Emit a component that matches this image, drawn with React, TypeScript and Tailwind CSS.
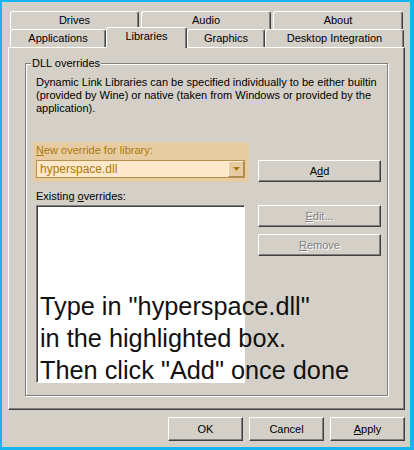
const ui = { fontFamily: '"Liberation Sans", Arial, sans-serif' };

const raised =
  "border border-t-white border-l-white border-r-[#404040] border-b-[#404040] shadow-[inset_-1px_-1px_0_#808080]";
const sunken =
  "border border-t-[#808080] border-l-[#808080] border-r-white border-b-white shadow-[inset_1px_1px_0_#404040]";

function Tab({ label, w, selected }: { label: string; w: string; selected?: boolean }) {
  return (
    <div
      className={`${w} flex items-center justify-center rounded-t-[3px] border-t border-l border-r border-t-white border-l-white border-r-[#404040] bg-[#d4d0c8] shadow-[inset_-1px_0_0_#808080] ${
        selected ? "relative z-10 -mb-[1px] h-[21px] pb-[3px]" : "h-[18px]"
      }`}
    >
      {label}
    </div>
  );
}

function Btn({
  children,
  w,
  h = "h-[22px]",
  disabled,
}: {
  children: React.ReactNode;
  w: string;
  h?: string;
  disabled?: boolean;
}) {
  return (
    <button
      type="button"
      className={`${raised} ${w} ${h} flex items-center justify-center bg-[#d4d0c8] ${
        disabled ? "text-[#808080] [text-shadow:1px_1px_0_#fff]" : "text-black"
      }`}
    >
      {children}
    </button>
  );
}

export default function App() {
  return (
    <div
      className="relative flex h-[450px] w-[414px] flex-col border-t-2 border-l-2 border-r-[4px] border-b-[3px] border-[#14b4f0] bg-[#d4d0c8] text-[11px] leading-[13px] text-black"
      style={ui}
    >
      {/* tabs */}
      <div className="ml-[8px] mt-[9px] flex gap-[2px]">
        <Tab label="Drives" w="w-[129px]" />
        <Tab label="Audio" w="w-[130px]" />
        <Tab label="About" w="w-[130px]" />
      </div>
      <div className="ml-[8px] flex h-[18px] items-end">
        <Tab label="Applications" w="w-[96px]" />
        <Tab label="Libraries" w="w-[81px]" selected />
        <Tab label="Graphics" w="w-[78px]" />
        <Tab label="Desktop Integration" w="w-[139px]" />
      </div>

      {/* panel */}
      <div className={`${raised} ml-[6px] mr-[5px] h-[363px] pt-[15px]`}>
        <div className="relative mx-[16px] h-[333px] border border-[#808080] shadow-[1px_1px_0_#fff,inset_1px_1px_0_#fff]">
          <span className="absolute -top-[7px] left-[5px] bg-[#d4d0c8] px-[1px]">DLL overrides</span>

          <p className="ml-[10px] mr-[10px] mt-[12px]">
            Dynamic Link Libraries can be specified individually to be either builtin (provided by Wine) or native
            (taken from Windows or provided by the application).
          </p>

          <div className="ml-[7px] mt-[27px] flex items-start">
            <div className="h-[40px] w-[216px] bg-[#e8cca1] pl-[3px] pt-[2px]">
              <div className="h-[16px] text-[#a8790c]">
                <u>N</u>ew override for library:
              </div>
              <div className="flex h-[18px] w-[209px] items-center border border-[#b3904e] bg-[#fee8c9] pl-[3px] text-[12px] text-[#a8790c]">
                <span className="flex-1">hyperspace.dll</span>
                <span className="flex h-[16px] w-[16px] items-center justify-center border border-t-[#fff2dc] border-l-[#fff2dc] border-r-[#a88a55] border-b-[#a88a55] bg-[#e8cca1]">
                  <svg width="7" height="4" viewBox="0 0 7 4">
                    <path d="M0 0h7L3.5 4z" fill="#a8790c" />
                  </svg>
                </span>
              </div>
            </div>
            <div className="ml-[9px] mt-[18px]">
              <Btn w="w-[123px]">
                A<u>d</u>d
              </Btn>
            </div>
          </div>

          <div className="ml-[10px] mt-[8px] h-[14px]">
            Existing <u>o</u>verrides:
          </div>

          <div className="ml-[10px] mt-[1px] flex items-start">
            <div className={`${sunken} h-[178px] w-[209px] bg-white`} />
            <div className="ml-[13px] flex flex-col gap-[7px]">
              <Btn w="w-[123px]" disabled>
                <span>
                  <u>E</u>dit...
                </span>
              </Btn>
              <Btn w="w-[123px]" disabled>
                <span>
                  <u>R</u>emove
                </span>
              </Btn>
            </div>
          </div>
        </div>
      </div>

      {/* dialog buttons */}
      <div className="mr-[5px] mt-[7px] flex justify-end gap-[6px]">
        <Btn w="w-[75px]" h="h-[24px]">
          OK
        </Btn>
        <Btn w="w-[75px]" h="h-[24px]">
          Cancel
        </Btn>
        <Btn w="w-[75px]" h="h-[24px]">
          <span>
            <u>A</u>pply
          </span>
        </Btn>
      </div>

      {/* instruction overlay */}
      <div
        className="absolute left-[38px] top-[288px] text-[25.3px] leading-[32px] text-[#111]"
        style={{ fontFamily: '"Liberation Sans", Arial, sans-serif' }}
      >
        <div>Type in "hyperspace.dll"</div>
        <div>in the highlighted box.</div>
        <div>Then click "Add" once done</div>
      </div>
    </div>
  );
}
